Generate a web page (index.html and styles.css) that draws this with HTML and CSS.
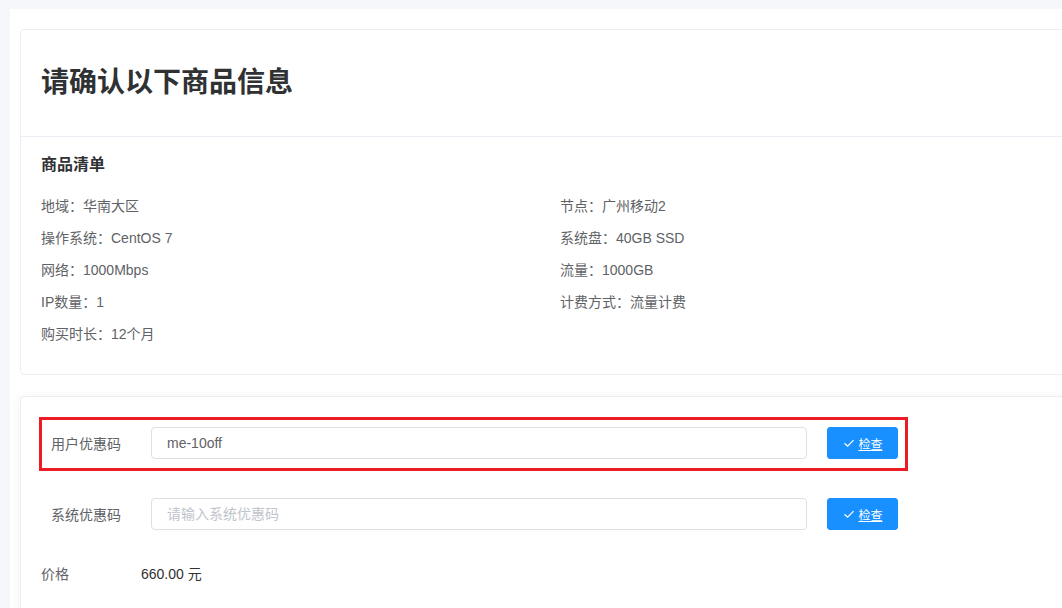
FILE: index.html
```html
<!DOCTYPE html>
<html lang="zh-CN">
<head>
<meta charset="utf-8">
<title>请确认以下商品信息</title>
<link rel="stylesheet" href="styles.css">
</head>
<body>
<div class="main">
  <section class="card">
    <header class="card-header">
      <h1 class="page-title">请确认以下商品信息</h1>
    </header>
    <div class="card-body">
      <h3 class="section-title">商品清单</h3>
      <div class="spec-grid">
        <div class="spec">地域：华南大区</div>
        <div class="spec">节点：广州移动2</div>
        <div class="spec">操作系统：CentOS 7</div>
        <div class="spec">系统盘：40GB SSD</div>
        <div class="spec">网络：1000Mbps</div>
        <div class="spec">流量：1000GB</div>
        <div class="spec">IP数量：1</div>
        <div class="spec">计费方式：流量计费</div>
        <div class="spec">购买时长：12个月</div>
      </div>
    </div>
  </section>

  <section class="card card-shadow">
    <div class="card-body form-body">
      <div class="form-row first-row">
        <span class="highlight"></span>
        <label class="form-label">用户优惠码</label>
        <input class="form-input" type="text" value="me-10off">
        <button class="btn-check" type="button">
          <svg class="check-icon" viewBox="0 0 12 12" width="12" height="12"><path d="M1.5 6.3 L4.6 9.2 L10.6 3.2" fill="none" stroke="#fff" stroke-width="1.2"/></svg>
          <span class="btn-text">检查</span>
        </button>
      </div>
      <div class="form-row second-row">
        <label class="form-label">系统优惠码</label>
        <input class="form-input" type="text" placeholder="请输入系统优惠码">
        <button class="btn-check" type="button">
          <svg class="check-icon" viewBox="0 0 12 12" width="12" height="12"><path d="M1.5 6.3 L4.6 9.2 L10.6 3.2" fill="none" stroke="#fff" stroke-width="1.2"/></svg>
          <span class="btn-text">检查</span>
        </button>
      </div>
      <div class="price-row">
        <span class="price-label">价格</span>
        <span class="price-value">660.00 元</span>
      </div>
    </div>
  </section>
</div>
</body>
</html>
```

FILE: styles.css
```css
html, body {
  margin: 0;
  padding: 0;
  overflow: hidden;
}
body {
  background: #f5f7fa;
  font-family: "Liberation Sans", "Noto Sans CJK SC", sans-serif;
  color: #606266;
  font-size: 14px;
}
.main {
  margin: 9px 0 0 10px;
  width: 1100px;
  min-height: 700px;
  box-sizing: border-box;
  background: #fff;
  padding: 20px 10px;
}
.card {
  width: 1080px;
  box-sizing: border-box;
  border: 1px solid #ebeef5;
  border-radius: 4px;
  background: #fff;
}
.card + .card {
  margin-top: 21px;
}
.card-shadow {
  box-shadow: 0 2px 12px 0 rgba(0, 0, 0, 0.06);
}
.card-header {
  padding: 33px 20px;
  border-bottom: 1px solid #ebeef5;
}
.page-title {
  margin: 0;
  font-size: 28px;
  line-height: 40px;
  font-weight: bold;
  color: #303133;
}
.card-body {
  padding: 16px 20px 24px;
}
.section-title {
  margin: 0 0 13px;
  font-size: 16px;
  line-height: 24px;
  font-weight: bold;
  color: #303133;
}
.spec-grid {
  display: grid;
  grid-template-columns: 1fr 1fr;
}
.spec {
  line-height: 32px;
  color: #606266;
}
.form-body {
  padding-top: 30px;
  padding-bottom: 40px;
}
.form-row {
  position: relative;
  display: flex;
  align-items: center;
  margin-left: 10px;
  height: 32px;
}
.second-row {
  margin-top: 39px;
}
.highlight {
  position: absolute;
  top: -10px;
  left: -12px;
  width: 869px;
  height: 54px;
  box-sizing: border-box;
  border: 3px solid #ec1c24;
  pointer-events: none;
}
.form-label {
  width: 100px;
  flex: none;
  color: #606266;
}
.form-input {
  width: 656px;
  height: 32px;
  box-sizing: border-box;
  border: 1px solid #dcdfe6;
  border-radius: 4px;
  padding: 0 15px;
  font-family: "Liberation Sans", "Noto Sans CJK SC", sans-serif;
  font-size: 14px;
  color: #606266;
  outline: none;
  background: #fff;
}
.form-input::placeholder {
  color: #c0c4cc;
}
.btn-check {
  margin-left: 20px;
  width: 71px;
  height: 32px;
  box-sizing: border-box;
  border: 1px solid #1890ff;
  border-radius: 3px;
  background: #1890ff;
  color: #fff;
  font-family: "Liberation Sans", "Noto Sans CJK SC", sans-serif;
  font-size: 12px;
  display: flex;
  align-items: center;
  justify-content: center;
  padding: 0 0 0 1px;
}
.check-icon {
  display: block;
  margin-right: 3px;
}
.btn-text {
  text-decoration: underline;
}
.price-row {
  display: flex;
  align-items: center;
  margin-top: 34px;
  line-height: 20px;
}
.price-label {
  width: 100px;
  flex: none;
  color: #606266;
}
.price-value {
  color: #303133;
}
```
